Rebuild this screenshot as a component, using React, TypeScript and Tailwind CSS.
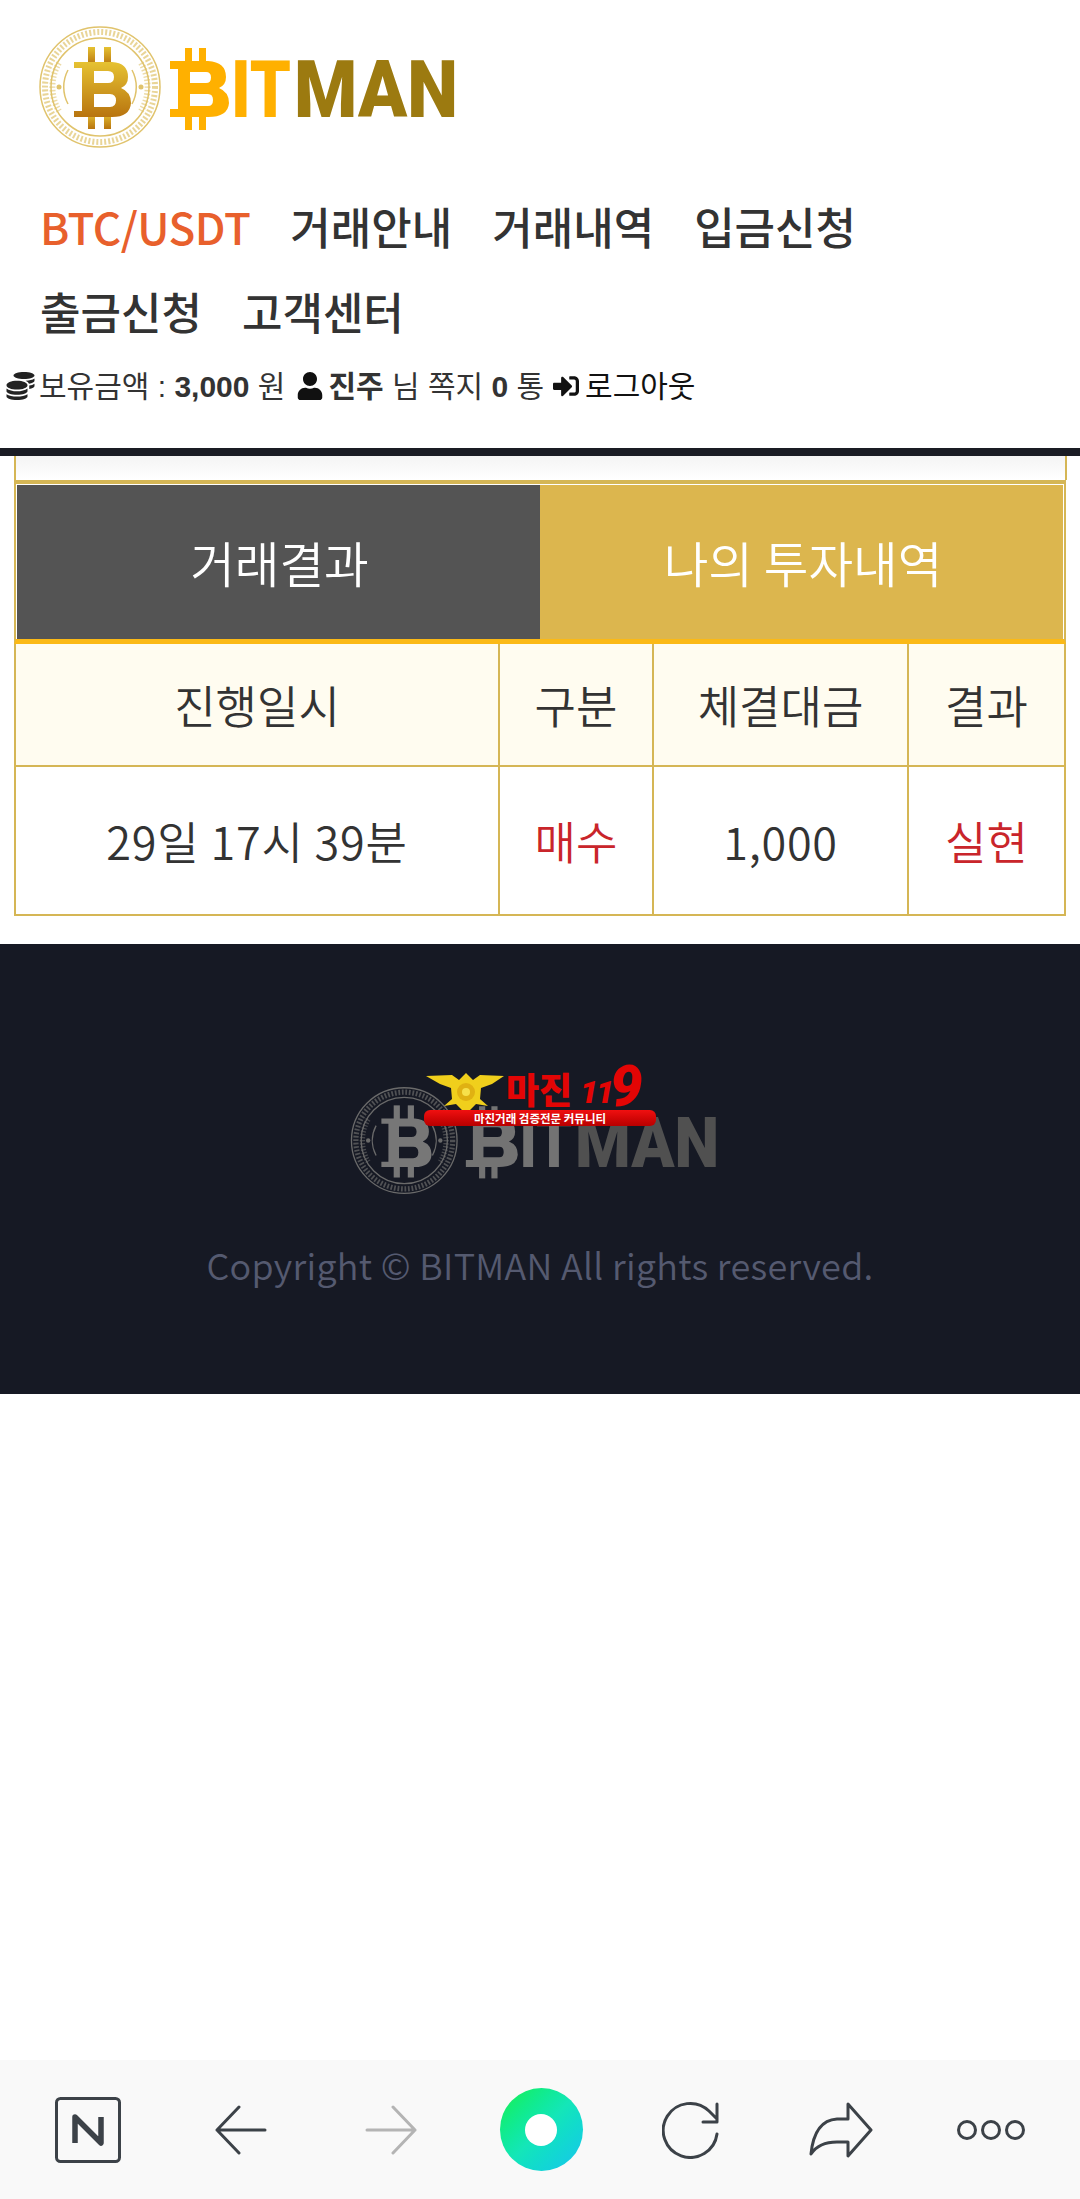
import React from 'react';
import { FaCoins, FaUser, FaSignInAlt } from 'react-icons/fa';

const kr = "font-['Noto_Sans_CJK_KR','Noto_Sans',sans-serif]";

const navItems = ['거래안내', '거래내역', '입금신청', '출금신청', '고객센터'];

const Logo: React.FC<{ id: string; c1: string; c2: string; bit: string; man: string; ring: string; className: string }> = ({ id, c1, c2, bit, man, ring, className }) => (
  <svg viewBox="0 0 420 125" className={className}>
    <defs>
      <linearGradient id={id} x1="0" y1="0" x2="0" y2="1">
        <stop offset="0" stopColor={c1} />
        <stop offset="1" stopColor={c2} />
      </linearGradient>
    </defs>
    <g fill="none" stroke={ring}>
      <circle cx="62" cy="62" r="60" strokeWidth="1.5" />
      <circle cx="62" cy="62" r="55" strokeWidth="6" strokeDasharray="2 2" opacity="0.7" />
      <circle cx="62" cy="62" r="49" strokeWidth="1.5" />
      <path d="M21 38 A47 47 0 0 0 21 86 M103 38 A47 47 0 0 1 103 86" strokeWidth="6" strokeDasharray="1.5 2" opacity="0.6" />
      <path d="M30 45 A36 36 0 0 0 30 79 M94 45 A36 36 0 0 1 94 79" strokeWidth="1.5" />
    </g>
    <circle cx="21" cy="62" r="2.500" fill={ring} />
    <circle cx="103" cy="62" r="2.500" fill={ring} />
    <g fill={`url(#${id})`}>
      <rect x="50" y="22" width="7" height="18" />
      <rect x="66" y="22" width="7" height="18" />
      <rect x="50" y="88" width="7" height="16" />
      <rect x="66" y="88" width="7" height="16" />
      <path fillRule="evenodd" d="M36 37 H74 Q90 38 90 52 Q90 60 83 63 Q93 67 93 78 Q92 92 74 92 H36 V86 H44 V43 H36 Z M56 46 V58 H70 Q76 58 76 52 Q76 46 70 46 Z M56 69 V82 H72 Q78 82 78 75.500 Q78 69 72 69 Z" />
    </g>
    <g fill={bit}>
      <rect x="147" y="23" width="7" height="18" />
      <rect x="161" y="23" width="7" height="18" />
      <rect x="147" y="88" width="7" height="17" />
      <rect x="161" y="88" width="7" height="17" />
      <path fillRule="evenodd" d="M132 36 H170 Q188 37 188 52 Q188 60 181 63 Q191 67 191 78 Q190 92 170 92 H132 V84 H140 V44 H132 Z M152 47 V58 H168 Q173 58 173 52.500 Q173 47 168 47 Z M152 69 V81 H170 Q175 81 175 75 Q175 69 170 69 Z" />
    </g>
    <text x="193" y="92" fontFamily="Roboto, sans-serif" fontWeight="900" fontSize="79" fill={bit} textLength="60" lengthAdjust="spacingAndGlyphs">IT</text>
    <text x="256" y="92" fontFamily="Roboto, sans-serif" fontWeight="900" fontSize="79" fill={man} textLength="164" lengthAdjust="spacingAndGlyphs">MAN</text>
  </svg>
);

const MajinBadge = () => (
  <div className="absolute left-[75px] top-[-13px] w-[232px] h-[53px]">
    <svg viewBox="0 0 80 38" className="absolute left-[2px] top-0 w-[80px] h-[38px]">
      <path d="M0 3 L26 2 L33 7 L40 0 L47 7 L54 2 L78 3 L66 11 L55 15 L54 26 L62 33 L50 31 L44 37 L36 37 L30 31 L18 33 L26 26 L25 15 L14 11 Z" fill="#f0cf1c" />
      <circle cx="40" cy="19" r="9" fill="#e0b112" />
      <circle cx="40" cy="19" r="4" fill="#f7e04a" />
    </svg>
    <span className={`absolute left-[82px] top-[-10px] text-[36px] leading-[50px] font-black text-[#e30505] ${kr}`}>마진</span>
    <span className="absolute left-[156px] top-[-4px] font-['Roboto',sans-serif] italic font-black text-[32px] leading-[46px] tracking-[-2px] text-[#e30505]">11</span>
    <span className="absolute left-[186px] top-[-16px] font-['Roboto',sans-serif] italic font-black text-[58px] leading-[58px] text-[#e30505]">9</span>
    <div className={`absolute left-0 right-0 top-[37px] h-[16px] rounded-md bg-gradient-to-b from-[#f01010] to-[#b80000] text-white text-[11.500px] leading-[16px] font-bold text-center ${kr}`}>
      마진거래 검증전문 커뮤니티
    </div>
  </div>
);

const thCls = 'border-2 border-[#d5b655] font-[350] h-[122px] bg-[#fffcf0]';
const tdCls = 'border-2 border-[#d5b655] h-[149px]';

export default function App() {
  return (
    <div className={`w-[1080px] min-h-[2199px] flex flex-col bg-white text-[#333] ${kr}`}>
      <header className="h-[456px] border-b-8 border-[#1a1c24] shrink-0">
        <div className="pt-[25px] pl-[38px]">
          <Logo id="coinGold" c1="#e6c232" c2="#b8740f" bit="#ffb000" man="#9c7a10" ring="#e0c36c" className="w-[420px] h-[125px] blur-[0.7px]" />
        </div>
        <nav className="flex flex-wrap gap-x-[40px] pl-[40px] w-[1000px] mt-[34px] text-[44px] leading-[85px] font-medium">
          <a className="text-[#e8602c] tracking-[-0.5px]">BTC/USDT</a>
          {navItems.map((item) => (
            <a key={item}>{item}</a>
          ))}
        </nav>
        <div className="flex items-center h-[40px] mt-[12px] pl-[6px] font-['Liberation_Sans','Noto_Sans_CJK_KR',sans-serif] text-[30px] text-[#333]">
          <FaCoins className="w-[29px] h-[28px] text-[#222] shrink-0" />
          <span className="ml-[4px]">보유금액 : <b>3,000</b> 원</span>
          <FaUser className="ml-[12px] w-[26px] h-[28px] text-[#111] shrink-0" />
          <span className="ml-[5px]"><b>진주</b> 님 쪽지 <b>0</b> 통</span>
          <FaSignInAlt className="ml-[8px] w-[28px] h-[26px] text-[#111] shrink-0" />
          <span className="ml-[5px] text-[#111]">로그아웃</span>
        </div>
      </header>

      <main className="px-[14px]">
        <div className="h-[24px] mr-[-1px] border-x-2 border-[#d5b655] bg-gradient-to-b from-[#f4f4f4] to-white" />
        <div className="w-[1052px] flex h-[164px] border-t-4 border-b-[5px] border-x-2 border-t-[#d5b655] border-b-[#fbb916] border-x-[#d5b655] p-[1px] pb-0 text-white text-[48.500px] font-[350]">
          <div className="w-[523px] bg-[#545454] flex items-center justify-center pl-[2px]">거래결과</div>
          <div className="flex-1 bg-[#dcb64e] flex items-center justify-center pl-[3px]">나의 투자내역</div>
        </div>
        <table className="w-[1052px] table-fixed border-collapse text-center text-[45px] font-[350]">
          <thead>
            <tr>
              <th className={`w-[484px] border-t-0 ${thCls}`}>진행일시</th>
              <th className={`w-[154px] border-t-0 ${thCls}`}>구분</th>
              <th className={`w-[255px] border-t-0 ${thCls}`}>체결대금</th>
              <th className={`border-t-0 ${thCls}`}>결과</th>
            </tr>
          </thead>
          <tbody>
            <tr>
              <td className={`${tdCls} tracking-[0.8px]`}>29일 17시 39분</td>
              <td className={`${tdCls} text-[#c9252b]`}>매수</td>
              <td className={`${tdCls} tracking-[0.7px]`}>1,000</td>
              <td className={`${tdCls} text-[#c9252b]`}>실현</td>
            </tr>
          </tbody>
        </table>
      </main>

      <footer className="mt-[28px] h-[450px] bg-[#161924] flex flex-col items-center pt-[142px]">
        <div className="relative w-[371px] h-[110px] ml-[-11px]">
          <Logo id="coinGrey" c1="#777" c2="#777" bit="#737373" man="#505050" ring="#6a6a6a" className="w-[371px] h-[110px] blur-[0.4px]" />
          <MajinBadge />
        </div>
        <p className="mt-[43px] text-[36px] leading-[50px] tracking-[0.3px] font-[350] text-[#555a70]">Copyright © BITMAN All rights reserved.</p>
      </footer>

      <div className="flex-1" />

      <div className="h-[139px] bg-[#f9f9f9] grid grid-cols-[156px_repeat(6,150px)] pl-[10px] items-center justify-items-center text-[#3c4248]">
        <svg viewBox="0 0 66 66" className="w-[66px] h-[66px]" fill="none">
          <rect x="1.500" y="1.500" width="63" height="63" rx="4" stroke="currentColor" strokeWidth="3" />
          <path d="M20 46 V20 L46 46 V20" stroke="currentColor" strokeWidth="5.500" strokeLinejoin="round" />
        </svg>
        <svg viewBox="0 0 52 50" className="w-[52px] h-[50px]" fill="none" stroke="currentColor" strokeWidth="3" strokeLinecap="round" strokeLinejoin="round">
          <path d="M24 2 L2 25 L24 48 M2 25 H50" />
        </svg>
        <svg viewBox="0 0 52 50" className="w-[52px] h-[50px] text-[#b4b4b4]" fill="none" stroke="currentColor" strokeWidth="3" strokeLinecap="round" strokeLinejoin="round">
          <path d="M28 2 L50 25 L28 48 M50 25 H2" />
        </svg>
        <div className="w-[83px] h-[83px] rounded-full bg-gradient-to-br from-[#1cf03c] via-[#14e6b8] to-[#1cc4ee] flex items-center justify-center">
          <div className="w-[32px] h-[32px] rounded-full bg-white" />
        </div>
        <svg viewBox="0 0 58 58" className="w-[58px] h-[58px]" fill="none" stroke="currentColor" strokeWidth="3" strokeLinecap="round" strokeLinejoin="round">
          <path d="M55 33 A27 27 0 1 1 47 10 L55 18 M55 3 V21 H41" />
        </svg>
        <svg viewBox="0 0 64 56" className="w-[64px] h-[56px]" fill="none" stroke="currentColor" strokeWidth="3" strokeLinecap="round" strokeLinejoin="round">
          <path d="M39 2 L62 28 L39 54 V40 H28 C18 40 8 43 2 52 C4 32 12 18 28 17 H39 Z" />
        </svg>
        <svg viewBox="0 0 70 22" className="w-[70px] h-[22px]" fill="none" stroke="currentColor" strokeWidth="3">
          <circle cx="11" cy="11" r="8.500" />
          <circle cx="35" cy="11" r="8.500" />
          <circle cx="59" cy="11" r="8.500" />
        </svg>
      </div>
    </div>
  );
}
